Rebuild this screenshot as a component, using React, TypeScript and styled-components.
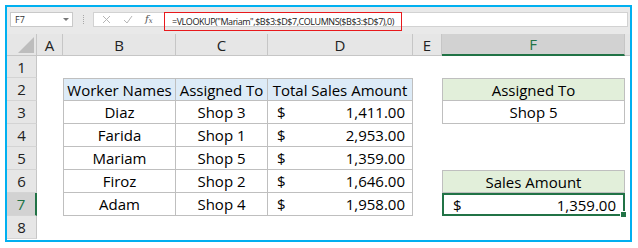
import React from 'react';
import styled, { createGlobalStyle, css } from 'styled-components';

const Global = createGlobalStyle`
  html, body { margin: 0; padding: 0; background: #fff; }
  body { font-family: "Open Sans", "Noto Sans", sans-serif; }
`;

const Frame = styled.div`
  margin: 5px;
  width: 627px;
  height: 237px;
  box-sizing: border-box;
  border: 2px solid #00b0f0;
  overflow: hidden;
  display: flex;
  flex-direction: column;
  background: #fff;
`;

const FormulaBar = styled.div`
  height: 27px;
  flex: none;
  box-sizing: border-box;
  padding: 5px 2px 0 3px;
  display: flex;
  align-items: flex-start;
  background: #e9e9e9;
`;

const NameBox = styled.div`
  width: 63px;
  height: 15px;
  box-sizing: border-box;
  border: 1px solid #c9c9c9;
  background: #fff;
  display: flex;
  align-items: center;
  justify-content: space-between;
  padding: 0 3px 0 4px;
  font-size: 9px;
  color: #333;
`;

const DropArrow = styled.span`
  width: 0;
  height: 0;
  border-left: 3px solid transparent;
  border-right: 3px solid transparent;
  border-top: 3px solid #777;
`;

const Grip = styled.div`
  width: 20px;
  height: 15px;
  display: flex;
  align-items: center;
  justify-content: center;
  &::before {
    content: '';
    height: 9px;
    border-left: 1px dotted #a8a8a8;
  }
`;

const FormulaBox = styled.div`
  flex: 1;
  height: 15px;
  box-sizing: border-box;
  border: 1px solid #d2d2d2;
  background: #fff;
  display: flex;
  align-items: flex-start;
`;

const IconGroup = styled.div`
  width: 70px;
  height: 13px;
  display: flex;
  align-items: center;
  padding-left: 8px;
  gap: 12px;
  box-sizing: border-box;
`;

const Fx = styled.span`
  font-family: "DejaVu Serif", "Liberation Serif", serif;
  font-style: italic;
  font-size: 10px;
  color: #555;
  line-height: 1;
  & sub { font-size: 7px; vertical-align: -1px; }
`;

const FormulaText = styled.div`
  margin-top: -1px;
  height: 19px;
  box-sizing: border-box;
  border: 1px solid #e8191c;
  display: flex;
  align-items: center;
  padding: 0 7px 0 7px;
  font-size: 9px;
  letter-spacing: -0.45px;
  color: #222;
  white-space: nowrap;
`;

const Sheet = styled.div`
  display: grid;
  grid-template-columns: 30px 26px 113px 92px 145px 29px 183px 5px;
  grid-template-rows: 22px 22px repeat(6, 23px) 23px 1fr;
  flex: 1;
  font-size: 15px;
  color: #000;
`;

const Corner = styled.div`
  background: #e6e6e6;
  border-right: 1px solid #c6c6c6;
  border-bottom: 1px solid #c6c6c6;
  display: flex;
  align-items: flex-end;
  justify-content: flex-end;
  padding: 0 2px 2px 0;
  box-sizing: border-box;
`;

const ColHead = styled.div<{ $active?: boolean }>`
  background: #e6e6e6;
  border-right: 1px solid #c6c6c6;
  border-bottom: 1px solid #c6c6c6;
  box-sizing: border-box;
  display: flex;
  align-items: center;
  justify-content: center;
  color: #222;
  ${(p) =>
    p.$active &&
    css`
      background: #d2d2d2;
      color: #217346;
      border-bottom: 2px solid #217346;
    `}
`;

const HeadFill = styled.div`
  background: #e6e6e6;
  border-bottom: 1px solid #c6c6c6;
`;

const RowHead = styled.div<{ $active?: boolean }>`
  background: #e6e6e6;
  border-right: 1px solid #c6c6c6;
  border-bottom: 1px solid #d4d4d4;
  box-sizing: border-box;
  display: flex;
  align-items: center;
  justify-content: center;
  color: #222;
  ${(p) =>
    p.$active &&
    css`
      background: #d2d2d2;
      color: #217346;
      border-right: 2px solid #217346;
    `}
`;

const Blank = styled.div`
  background: #fff;
`;

type Fill = 'blue' | 'green' | undefined;

const Cell = styled.div<{ $fill?: Fill; $top?: boolean; $left?: boolean; $align?: 'center' | 'split' }>`
  position: relative;
  box-sizing: border-box;
  border-right: 1px solid #bfbfbf;
  border-bottom: 1px solid #bfbfbf;
  ${(p) => p.$top && css`border-top: 1px solid #bfbfbf;`}
  ${(p) => p.$left && css`border-left: 1px solid #bfbfbf;`}
  background: ${(p) => (p.$fill === 'blue' ? '#ddebf7' : p.$fill === 'green' ? '#e2efda' : '#fff')};
  display: flex;
  align-items: center;
  justify-content: ${(p) => (p.$align === 'split' ? 'space-between' : 'center')};
  padding: ${(p) => (p.$align === 'split' ? '0 7px 0 9px' : '0')};
  white-space: nowrap;
`;

const Selected = styled(Cell)`
  border: 2px solid #217346;
  padding: 0 7px 0 9px;
  &::after {
    content: '';
    position: absolute;
    right: -4px;
    bottom: -4px;
    width: 5px;
    height: 5px;
    background: #217346;
    border: 1px solid #fff;
  }
`;

const rows = [
  ['Diaz', 'Shop 3', '1,411.00'],
  ['Farida', 'Shop 1', '2,953.00'],
  ['Mariam', 'Shop 5', '1,359.00'],
  ['Firoz', 'Shop 2', '1,646.00'],
  ['Adam', 'Shop 4', '1,958.00'],
];

const Tri = () => (
  <svg width="16" height="16" viewBox="0 0 16 16">
    <polygon points="16,0 16,16 0,16" fill="#bdbdbd" />
  </svg>
);

const XIcon = () => (
  <svg width="9" height="9" viewBox="0 0 9 9">
    <path d="M1 1 L8 8 M8 1 L1 8" stroke="#b5b5b5" strokeWidth="1" fill="none" />
  </svg>
);

const CheckIcon = () => (
  <svg width="10" height="9" viewBox="0 0 10 9">
    <path d="M1 5 L4 8 L9 1" stroke="#b5b5b5" strokeWidth="1" fill="none" />
  </svg>
);

export default function App() {
  const renderRow = (n: number) => {
    const r = n - 3;
    if (n === 1 || n === 8) {
      return (
        <React.Fragment key={n}>
          <RowHead>{n}</RowHead>
          {Array.from({ length: 7 }).map((_, i) => (
            <Blank key={i} />
          ))}
        </React.Fragment>
      );
    }
    let fCell: React.ReactNode = <Blank />;
    if (n === 2) fCell = <Cell $fill="green" $top $left>Assigned To</Cell>;
    if (n === 3) fCell = <Cell $left>Shop 5</Cell>;
    if (n === 6) fCell = <Cell $fill="green" $top $left>Sales Amount</Cell>;
    if (n === 7)
      fCell = (
        <Selected $align="split">
          <span>$</span>
          <span>1,359.00</span>
        </Selected>
      );
    return (
      <React.Fragment key={n}>
        <RowHead $active={n === 7}>{n}</RowHead>
        <Blank />
        {n === 2 ? (
          <>
            <Cell $fill="blue" $top $left>Worker Names</Cell>
            <Cell $fill="blue" $top>Assigned To</Cell>
            <Cell $fill="blue" $top>Total Sales Amount</Cell>
          </>
        ) : (
          <>
            <Cell $left>{rows[r][0]}</Cell>
            <Cell>{rows[r][1]}</Cell>
            <Cell $align="split">
              <span>$</span>
              <span>{rows[r][2]}</span>
            </Cell>
          </>
        )}
        <Blank />
        {fCell}
        <Blank />
      </React.Fragment>
    );
  };

  return (
    <>
      <Global />
      <Frame>
        <FormulaBar>
          <NameBox>
            <span>F7</span>
            <DropArrow />
          </NameBox>
          <Grip />
          <FormulaBox>
            <IconGroup>
              <XIcon />
              <CheckIcon />
              <Fx>
                f<sub>x</sub>
              </Fx>
            </IconGroup>
            <FormulaText>=VLOOKUP("Mariam",$B$3:$D$7,COLUMNS($B$3:$D$7),0)</FormulaText>
          </FormulaBox>
        </FormulaBar>
        <Sheet>
          <Corner>
            <Tri />
          </Corner>
          {['A', 'B', 'C', 'D', 'E', 'F'].map((c) => (
            <ColHead key={c} $active={c === 'F'}>
              {c}
            </ColHead>
          ))}
          <HeadFill />
          {[1, 2, 3, 4, 5, 6, 7, 8].map(renderRow)}
        </Sheet>
      </Frame>
    </>
  );
}
